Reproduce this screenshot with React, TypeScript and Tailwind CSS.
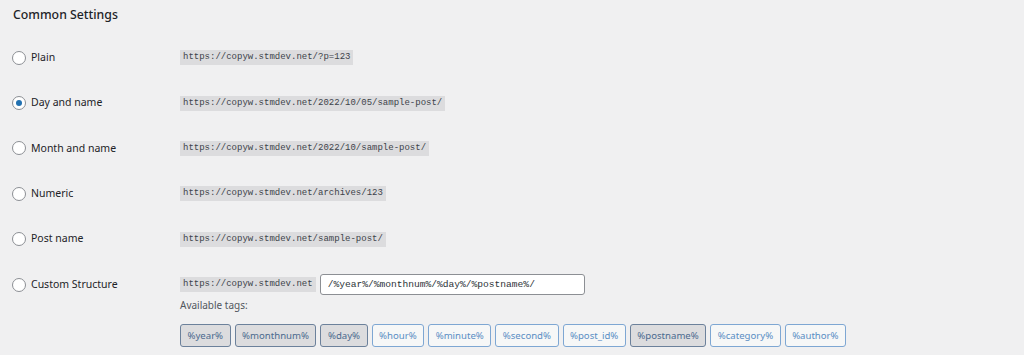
const options = [
  { label: "Plain", url: "https://copyw.stmdev.net/?p=123" },
  { label: "Day and name", url: "https://copyw.stmdev.net/2022/10/05/sample-post/", checked: true },
  { label: "Month and name", url: "https://copyw.stmdev.net/2022/10/sample-post/" },
  { label: "Numeric", url: "https://copyw.stmdev.net/archives/123" },
  { label: "Post name", url: "https://copyw.stmdev.net/sample-post/" },
];

const tags = [
  { name: "%year%", active: true },
  { name: "%monthnum%", active: true },
  { name: "%day%", active: true },
  { name: "%hour%" },
  { name: "%minute%" },
  { name: "%second%" },
  { name: "%post_id%" },
  { name: "%postname%", active: true },
  { name: "%category%" },
  { name: "%author%" },
];

function Radio({ checked }: { checked?: boolean }) {
  return (
    <span className="flex h-[14px] w-[14px] shrink-0 items-center justify-center rounded-full border border-[#8c8f94] bg-white">
      {checked && <span className="h-[6px] w-[6px] rounded-full bg-[#2271b1]" />}
    </span>
  );
}

function Code({ children }: { children: string }) {
  return (
    <code className="bg-[#dcdcde] px-[3px] py-[1px] font-['Liberation_Mono',monospace] text-[9px] leading-[13px] text-[#3c434a]">
      {children}
    </code>
  );
}

export default function App() {
  return (
    <main className="h-[355px] w-[1024px] overflow-hidden bg-[#f0f0f1] px-[12px] font-['Noto_Sans',sans-serif] text-[#1d2327]">
      <h2 className="mb-[10px] pl-px pt-[5px] text-[12.3px] font-medium leading-[20px]">Common Settings</h2>

      {options.map((opt) => (
        <div key={opt.label} className="flex h-[45.4px] items-center">
          <label className="flex w-[168px] items-center gap-[5px] text-[10.5px]">
            <Radio checked={opt.checked} />
            {opt.label}
          </label>
          <Code>{opt.url}</Code>
        </div>
      ))}

      <div className="flex pt-[12.5px]">
        <label className="flex h-[21px] w-[168px] items-center gap-[5px] text-[10.5px]">
          <Radio />
          Custom Structure
        </label>
        <div>
          <div className="flex items-center gap-[4px]">
            <Code>https://copyw.stmdev.net</Code>
            <input
              readOnly
              value="/%year%/%monthnum%/%day%/%postname%/"
              className="h-[21px] w-[265px] rounded-[3px] border border-[#8c8f94] bg-white px-[7px] font-['Liberation_Mono',monospace] text-[9.6px] text-[#2c3338] outline-none"
            />
          </div>
          <p className="mt-[2px] text-[10px] leading-[16px] text-[#50575e]">Available tags:</p>
          <div className="mt-[11px] flex gap-[4px]">
            {tags.map((tag) => (
              <button
                key={tag.name}
                className={
                  tag.active
                    ? "h-[23px] rounded-[3px] border border-[#6c819b] bg-[#dcdcde] px-[6.5px] text-[9.6px] text-[#4b6a8e]"
                    : "h-[23px] rounded-[3px] border border-[#7ea7d3] bg-[#f6f7f7] px-[6.5px] text-[9.6px] text-[#5a8ec4]"
                }
              >
                {tag.name}
              </button>
            ))}
          </div>
        </div>
      </div>
    </main>
  );
}
